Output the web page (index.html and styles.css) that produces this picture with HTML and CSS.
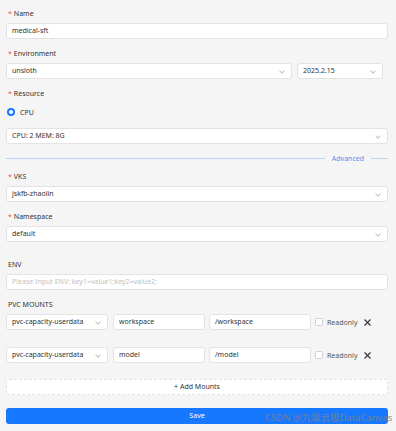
FILE: index.html
```html
<!DOCTYPE html>
<html lang="en">
<head>
  <meta charset="UTF-8" />
  <meta name="viewport" content="width=device-width, initial-scale=1.0"/>
  <title>Create Job</title>
  <link rel="stylesheet" href="styles.css">
</head>
<body>
  <form class="job-form">
    <div class="field">
      <label class="label required">Name</label>
      <div class="control">medical-sft</div>
    </div>

    <div class="field">
      <label class="label required">Environment</label>
      <div class="row">
        <div class="control select env">unsloth<span class="chev"></span></div>
        <div class="control select version">2025.2.15<span class="chev"></span></div>
      </div>
    </div>

    <div class="field">
      <label class="label required">Resource</label>
      <div class="radio-row">
        <span class="radio"></span>
        <span>CPU</span>
      </div>
      <div class="control select">CPU: 2 MEM: 8G<span class="chev"></span></div>
    </div>

    <div class="divider">
      <span class="line"></span>
      <span class="divider-text">Advanced</span>
      <span class="line short"></span>
    </div>

    <div class="field">
      <label class="label required">VKS</label>
      <div class="control select">jskfb-zhaolin<span class="chev"></span></div>
    </div>

    <div class="field">
      <label class="label required">Namespace</label>
      <div class="control select">default<span class="chev"></span></div>
    </div>

    <div class="field env-field">
      <label class="label">ENV</label>
      <div class="control placeholder">Please Input ENV: key1=value1;key2=value2;</div>
    </div>

    <div class="field">
      <label class="label">PVC MOUNTS</label>
      <div class="mount">
        <div class="control select pvc">pvc-capacity-userdata<span class="chev"></span></div>
        <div class="control sub">workspace</div>
        <div class="control path">/workspace</div>
        <span class="checkbox"></span>
        <span class="readonly">Readonly</span>
        <svg class="remove" viewBox="0 0 7 7" width="7" height="7">
          <path d="M0.5 0.5 L6.5 6.5 M6.5 0.5 L0.5 6.5" stroke="#333" stroke-width="1.1" fill="none"/>
        </svg>
      </div>
      <div class="mount">
        <div class="control select pvc">pvc-capacity-userdata<span class="chev"></span></div>
        <div class="control sub">model</div>
        <div class="control path">/model</div>
        <span class="checkbox"></span>
        <span class="readonly">Readonly</span>
        <svg class="remove" viewBox="0 0 7 7" width="7" height="7">
          <path d="M0.5 0.5 L6.5 6.5 M6.5 0.5 L0.5 6.5" stroke="#333" stroke-width="1.1" fill="none"/>
        </svg>
      </div>
    </div>

    <div class="add-btn">+ Add Mounts</div>
    <div class="save-btn">Save</div>
  </form>

  <div class="watermark">CSDN @九章云极DataCanvas</div>
</body>
</html>
```

FILE: styles.css
```css
:root {
  --bg: #f5f5f5;
  --border: #e3e3e3;
  --text: #333;
  --muted: #bfbfbf;
  --primary: #1677ff;
  --red: #ff4d4f;
  --radius: 3px;
}

* {
  box-sizing: border-box;
  margin: 0;
  padding: 0;
}

body {
  font-family: "Noto Sans", sans-serif;
  font-size: 7px;
  background: var(--bg);
  color: var(--text);
  width: 396px;
  height: 431px;
  overflow: hidden;
  position: relative;
}

.job-form {
  display: flex;
  flex-direction: column;
  padding: 9px 8px 0 6px;
}

.field {
  display: flex;
  flex-direction: column;
  margin-bottom: 10px;
}

.label {
  height: 10px;
  line-height: 10px;
  margin-bottom: 4px;
  padding-left: 2px;
  color: #333;
}

.label.required::before {
  content: "*";
  color: var(--red);
  margin-right: 2px;
}

.control {
  height: 16px;
  line-height: 14px;
  background: #fff;
  border: 1px solid var(--border);
  border-radius: var(--radius);
  padding: 0 5px;
  position: relative;
  white-space: nowrap;
}

.placeholder {
  color: var(--muted);
}

.chev {
  position: absolute;
  right: 7px;
  top: 5px;
  width: 4px;
  height: 4px;
  border-right: 1px solid #c4c4c4;
  border-bottom: 1px solid #c4c4c4;
  transform: rotate(45deg);
}

.row {
  display: flex;
  gap: 5px;
}

.env {
  width: 286px;
}

.version {
  width: 86px;
}

.radio-row {
  display: flex;
  align-items: center;
  gap: 5px;
  height: 18px;
  margin-bottom: 7px;
  padding-left: 1px;
}

.radio {
  width: 8px;
  height: 8px;
  border-radius: 50%;
  border: 2.5px solid var(--primary);
  background: #fff;
}

.divider {
  display: flex;
  align-items: center;
  height: 10px;
  margin: -1px 0 9px;
}

.divider .line {
  flex: 1;
  height: 1px;
  background: #bcd6fb;
}

.divider .line.short {
  flex: 0 0 17px;
}

.divider-text {
  color: #5a8ef5;
  padding: 0 7px;
}

.env-field {
  margin-top: 8px;
}

.mount {
  display: flex;
  align-items: center;
  margin-bottom: 17px;
}

.mount:last-child {
  margin-bottom: 6px;
}

.pvc {
  width: 102px;
  margin-right: 5px;
}

.sub {
  width: 92px;
  margin-right: 4px;
}

.path {
  width: 102px;
  margin-right: 4px;
}

.checkbox {
  width: 8px;
  height: 8px;
  border: 1px solid #d0d0d0;
  border-radius: 1.5px;
  background: #fff;
  margin-right: 4px;
}

.readonly {
  color: #555;
  margin-right: 7px;
}

.remove {
  display: block;
}

.add-btn {
  height: 16px;
  line-height: 14px;
  text-align: center;
  background: #fff;
  border: 1px dashed var(--border);
  border-radius: var(--radius);
  margin-bottom: 13px;
}

.save-btn {
  height: 16px;
  line-height: 16px;
  text-align: center;
  color: #fff;
  background: var(--primary);
  border-radius: var(--radius);
}

.watermark {
  position: absolute;
  left: 265px;
  top: 412px;
  font-family: "Noto Sans", "Noto Sans CJK SC", sans-serif;
  font-size: 9.5px;
  line-height: 12px;
  color: rgba(130, 130, 130, 0.85);
  white-space: nowrap;
}
```
